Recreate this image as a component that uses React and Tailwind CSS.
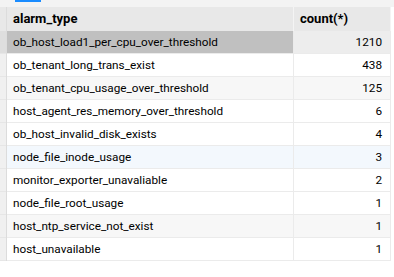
import React from "react";

const rows = [
  { type: "ob_host_load1_per_cpu_over_threshold", count: 1210, tone: "selected" },
  { type: "ob_tenant_long_trans_exist", count: 438, tone: "white" },
  { type: "ob_tenant_cpu_usage_over_threshold", count: 125, tone: "gray" },
  { type: "host_agent_res_memory_over_threshold", count: 6, tone: "white" },
  { type: "ob_host_invalid_disk_exists", count: 4, tone: "white" },
  { type: "node_file_inode_usage", count: 3, tone: "blue" },
  { type: "monitor_exporter_unavaliable", count: 2, tone: "white" },
  { type: "node_file_root_usage", count: 1, tone: "white" },
  { type: "host_ntp_service_not_exist", count: 1, tone: "gray" },
  { type: "host_unavailable", count: 1, tone: "white" },
];

const toneFirst = {
  selected: "bg-[#c0c0c0]",
  white: "bg-white",
  gray: "bg-[#f7f7f7]",
  blue: "bg-[#f3f8fd]",
};

const toneSecond = {
  selected: "bg-[#ededed]",
  white: "bg-white",
  gray: "bg-[#f7f7f7]",
  blue: "bg-[#f3f8fd]",
};

export default function App() {
  return (
    <div
      className="w-[394px] h-[277px] bg-white text-black overflow-hidden"
      style={{ fontFamily: 'Roboto, "Noto Sans", sans-serif' }}
    >
      {/* top strip with active tab marker */}
      <div className="h-[7px] bg-[#f3f3f3]">
        <div className="ml-[15px] w-[26px] h-[2px] bg-[#1a8cff]" />
      </div>

      <div className="flex">
        {/* row gutter */}
        <div className="w-[7px] flex flex-col border-r border-[#dcdcdc]">
          <div className="h-[24px] bg-[#e8e8e8]" />
          {rows.map((r, i) => (
            <div
              key={i}
              className={`h-[23px] border-b border-[#e6e6e6] ${
                r.tone === "selected" ? "bg-[#dedede]" : "bg-[#f0f0f0]"
              }`}
            />
          ))}
        </div>

        {/* grid */}
        <div className="w-[384px] flex flex-col">
          <div className="flex h-[24px] bg-[#e8e8e8] font-bold text-[13px] leading-[24px]">
            <div className="w-[287px] pl-[6px] border-r border-[#f4f4f4]">alarm_type</div>
            <div className="w-[97px] pl-[6px] border-r border-[#f4f4f4]">count(*)</div>
          </div>
          {rows.map((r, i) => (
            <div key={i} className="flex h-[23px] text-[11.75px] leading-[22px]">
              <div
                className={`w-[287px] pl-[6px] border-r border-b border-[#ebebeb] whitespace-nowrap overflow-hidden ${toneFirst[r.tone]}`}
              >
                {r.type}
              </div>
              <div
                className={`w-[97px] pr-[8px] text-right border-r border-b border-[#ebebeb] ${toneSecond[r.tone]}`}
              >
                {r.count}
              </div>
            </div>
          ))}
        </div>
      </div>
    </div>
  );
}
